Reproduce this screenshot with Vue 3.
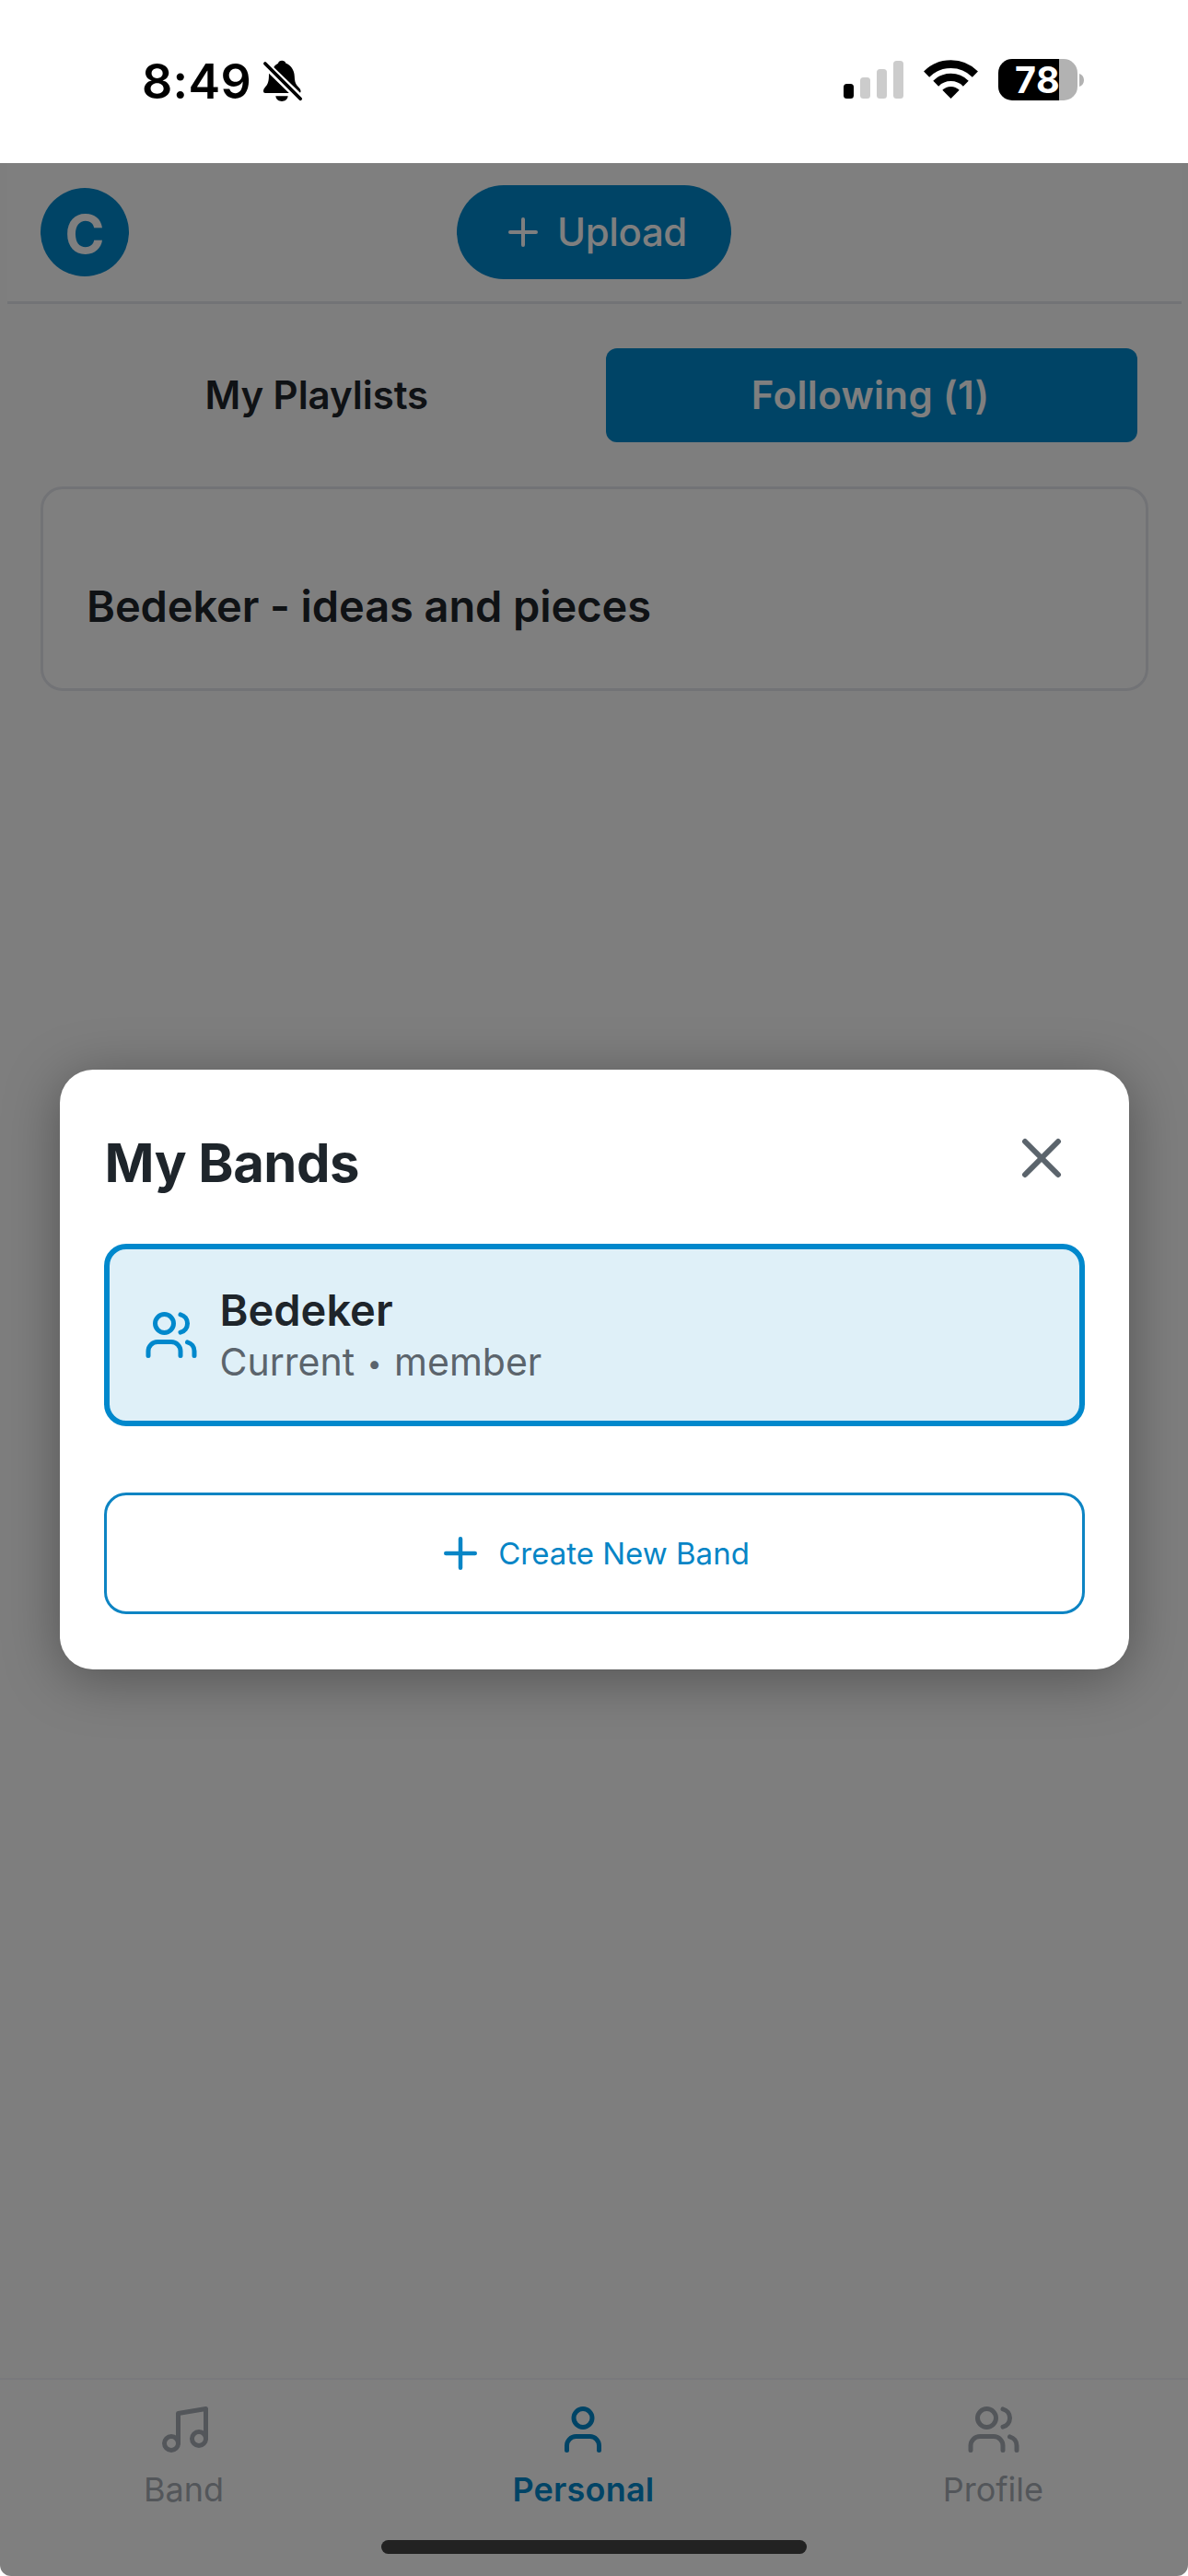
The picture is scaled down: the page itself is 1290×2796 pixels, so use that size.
<script setup>
import { ref } from 'vue'

const bars = [
  { height: 16, on: true },
  { height: 23, on: false },
  { height: 32, on: false },
  { height: 41, on: false },
]
const tabs = ['My Playlists', 'Following (1)']
const activeTab = ref(1)
const playlists = ['Bedeker - ideas and pieces']
const bands = [{ name: 'Bedeker', role: 'member' }]
const nav = [
  { label: 'Band', icon: 'music' },
  { label: 'Personal', icon: 'user' },
  { label: 'Profile', icon: 'users' },
]
const activeNav = ref('Personal')
</script>

<template>
  <div class="screen">
    <div class="status">
      <span class="time">8:49</span>
      <svg class="bell" viewBox="9 9 44 48" fill="#000">
        <path d="M21.3 18C22.8 15.4 24.6 14.6 26 13.8C26.6 9.8 33.6 9.8 34.2 13.6C40 16 43.5 21 43.8 28C44 34 45 36.200 48 39.500C50.600 42.200 51.300 43.800 50 45.800Z" />
        <path d="M16 24.800L37.800 46H12C9.500 46 9.500 42.600 11.300 40.500C15.200 36 16 34 16 24.800Z" />
        <path d="M23.300 49.200h13.400c-.9 7.600-12.500 7.600-13.400 0z" />
        <path d="M11.900 14L50.200 52.200" fill="none" stroke="#000" stroke-width="3.700" stroke-linecap="round" />
      </svg>
      <div class="indicators">
        <div class="signal">
          <i v-for="(b, i) in bars" :key="i" :class="{ on: b.on }" :style="{ height: b.height + 'px' }"></i>
        </div>
        <svg class="wifi" viewBox="0 0 59 43" fill="none" stroke="#000">
          <path d="M3.100 15.600A37.300 37.300 0 0 1 55.900 15.600" stroke-width="8.600" />
          <path d="M13.200 25.700A23.100 23.100 0 0 1 45.800 25.700" stroke-width="8.300" />
          <path d="M29.500 42L20.300 32.800A13 13 0 0 1 38.700 32.800Z" fill="#000" stroke="none" />
        </svg>
        <div class="battery">
          <div class="cell"><span>78</span></div>
          <svg class="nub" viewBox="0 0 5 14" fill="#b2b2b2"><path d="M0 0C3 .8 5 3.500 5 7S3 13.200 0 14Z" /></svg>
        </div>
      </div>
    </div>

    <div class="app">
      <header class="topbar">
        <div class="avatar">C</div>
        <button class="upload">
          <svg class="ic48" viewBox="0 0 24 24"><path d="M5 12h14M12 5v14" /></svg>
          <span>Upload</span>
        </button>
      </header>

      <main class="content">
        <div class="tabs">
          <button
            v-for="(t, i) in tabs"
            :key="t"
            class="tab"
            :class="{ active: i === activeTab }"
            @click="activeTab = i"
          >{{ t }}</button>
        </div>
        <div v-for="p in playlists" :key="p" class="card">{{ p }}</div>
      </main>

      <nav class="nav">
        <div v-for="n in nav" :key="n.label" class="item" :class="{ active: n.label === activeNav }">
          <svg class="ic60" viewBox="0 0 24 24">
            <template v-if="n.icon === 'music'">
              <path d="M9 18V5l12-2v13" />
              <circle cx="6" cy="18" r="3" />
              <circle cx="18" cy="16" r="3" />
            </template>
            <template v-else-if="n.icon === 'user'">
              <path d="M19 21v-2a4 4 0 0 0-4-4H9a4 4 0 0 0-4 4v2" />
              <circle cx="12" cy="7" r="4" />
            </template>
            <template v-else>
              <path d="M16 21v-2a4 4 0 0 0-4-4H6a4 4 0 0 0-4 4v2" />
              <circle cx="9" cy="7" r="4" />
              <path d="M22 21v-2a4 4 0 0 0-3-3.870M16 3.130a4 4 0 0 1 0 7.750" />
            </template>
          </svg>
          <span>{{ n.label }}</span>
        </div>
      </nav>

      <div class="overlay">
        <section class="modal">
          <div class="modal-head">
            <h2>My Bands</h2>
            <svg class="close" viewBox="0 0 24 24"><path d="M18 6L6 18M6 6l12 12" /></svg>
          </div>
          <div v-for="b in bands" :key="b.name" class="band">
            <svg class="ic60" viewBox="0 0 24 24">
              <path d="M16 21v-2a4 4 0 0 0-4-4H6a4 4 0 0 0-4 4v2" />
              <circle cx="9" cy="7" r="4" />
              <path d="M22 21v-2a4 4 0 0 0-3-3.870M16 3.130a4 4 0 0 1 0 7.750" />
            </svg>
            <div>
              <div class="name">{{ b.name }}</div>
              <div class="role">Current<span class="dot">•</span>{{ b.role }}</div>
            </div>
          </div>
          <button class="create">
            <svg class="ic54" viewBox="0 0 24 24"><path d="M5 12h14M12 5v14" /></svg>
            <span>Create New Band</span>
          </button>
        </section>
      </div>

      <div class="home"></div>
    </div>
  </div>
</template>

<style>
body {
  margin: 0;
  background: #fff;
}
</style>

<style scoped>
.screen {
  width: 1290px;
  height: 2796px;
  display: flex;
  flex-direction: column;
  background: #fff;
  font-family: Inter, "Liberation Sans", sans-serif;
  color: #1e252b;
  overflow: hidden;
}
.screen *,
.screen {
  box-sizing: border-box;
}
button {
  border: 0;
  padding: 0;
  font-family: inherit;
}
svg {
  display: block;
  flex: none;
}

.status {
  height: 177px;
  flex: none;
  display: flex;
  align-items: center;
  padding: 0 113px 1px 154px;
  color: #000;
}
.time {
  font-size: 52px;
  font-weight: 600;
  letter-spacing: 0.3px;
  width: 131px;
}
.bell {
  width: 44px;
  height: 48px;
}
.indicators {
  margin-left: auto;
  display: flex;
  align-items: center;
  gap: 22px;
  padding-bottom: 3px;
}
.signal {
  display: flex;
  align-items: flex-end;
  gap: 7px;
  height: 41px;
}
.signal i {
  width: 11px;
  border-radius: 3.5px;
  background: #ccc;
}
.signal i.on {
  background: #000;
}
.wifi {
  width: 59px;
  height: 43px;
}
.battery {
  display: flex;
  align-items: center;
  gap: 2.5px;
}
.cell {
  width: 85.500px;
  height: 45px;
  border-radius: 15px;
  display: flex;
  align-items: center;
  justify-content: center;
  background: linear-gradient(90deg, #000 66px, #b2b2b2 66px);
  color: #fff;
  font-size: 39.500px;
  font-weight: 700;
  letter-spacing: 0.8px;
  line-height: 45px;
  padding-top: 1px;
}
.nub {
  width: 5px;
  height: 14px;
}

.app {
  position: relative;
  flex: 1;
  display: flex;
  flex-direction: column;
  background: #fcfcfc;
  border-radius: 0 0 12px 12px;
  overflow: hidden;
}
.topbar {
  height: 153px;
  flex: none;
  margin: 0 7px 0 8px;
  padding: 0 37px 0 36px;
  display: grid;
  grid-template-columns: 1fr auto 1fr;
  align-items: center;
  background: #fff;
  border-bottom: 3px solid #e4e6ec;
}
.avatar {
  width: 96px;
  height: 96px;
  border-radius: 50%;
  background: #08c;
  color: #fff;
  display: flex;
  align-items: center;
  justify-content: center;
  font-size: 58px;
  font-weight: 700;
  line-height: 96px;
  padding-top: 4px;
}
.upload {
  width: 298px;
  height: 102px;
  border-radius: 51px;
  background: #08c;
  color: #fff;
  display: flex;
  align-items: center;
  justify-content: center;
  gap: 13px;
  font-size: 42px;
  font-weight: 450;
  letter-spacing: -0.4px;
}
.upload span {
  margin-top: -2px;
}
.ic48,
.ic54,
.ic60,
.close {
  fill: none;
  stroke: currentColor;
  stroke-width: 2;
  stroke-linecap: round;
  stroke-linejoin: round;
}
.ic48 {
  width: 48px;
  height: 48px;
}
.ic54 {
  width: 54px;
  height: 54px;
}
.ic60 {
  width: 60px;
  height: 60px;
}

.content {
  flex: 1;
  padding: 48px 43px 0 44px;
}
.tabs {
  display: flex;
  gap: 24px;
  padding: 0 12px;
  margin-bottom: 48px;
}
.tab {
  flex: 1;
  height: 102px;
  border-radius: 12px;
  background: transparent;
  color: #1e252b;
  font-size: 42px;
  font-weight: 600;
  letter-spacing: -0.05px;
  padding: 0 2px 2px 0;
}
.tab.active {
  background: #08c;
  color: #fff;
  letter-spacing: 0.35px;
}
.card {
  height: 222px;
  border: 3px solid #e4e6ec;
  border-radius: 24px;
  background: #fff;
  padding: 99px 48px 0 47px;
  font-size: 47px;
  font-weight: 600;
  letter-spacing: -0.1px;
  line-height: 56px;
}

.nav {
  height: 215px;
  flex: none;
  display: flex;
  justify-content: space-between;
  padding: 24px 157px 0 156px;
  border-top: 2px solid #f3f3f9;
  background: #fff;
}
.item {
  display: flex;
  flex-direction: column;
  align-items: center;
  gap: 13px;
  color: #a6adb5;
  font-size: 36px;
  line-height: 44px;
}
.item:not(.active) .ic60 {
  margin: 0 -2px 0 0;
}
.item.active {
  color: #08c;
  font-weight: 600;
  letter-spacing: 0.2px;
}

.overlay {
  position: absolute;
  inset: 0;
  display: flex;
  align-items: center;
  justify-content: center;
  background: rgba(0, 0, 0, 0.5);
}
.modal {
  width: 1161px;
  height: 651px;
  padding: 0 48px;
  border-radius: 36px;
  background: #fff;
  box-shadow: 0 9px 60px rgba(0, 0, 0, 0.34);
}
.modal-head {
  height: 189px;
  display: flex;
  align-items: flex-start;
  justify-content: space-between;
}
h2 {
  margin: 65px 0 0 1px;
  font-size: 58px;
  font-weight: 700;
  letter-spacing: -0.5px;
  line-height: 72px;
}
.close {
  width: 72px;
  height: 72px;
  margin: 60px 11px 0 0;
  color: #5b646c;
}
.band {
  height: 198px;
  border: 6px solid #08c;
  border-radius: 24px;
  background: #dff0f8;
  display: flex;
  align-items: center;
  gap: 23px;
  padding: 0 37px;
}
.band .ic60 {
  color: #08c;
}
.name {
  font-size: 47px;
  font-weight: 600;
  line-height: 58px;
}
.role {
  font-size: 41px;
  line-height: 54px;
  color: #5b646c;
  white-space: nowrap;
}
.dot {
  display: inline-block;
  width: 43px;
  text-align: center;
  font-size: 28px;
  line-height: 40px;
  vertical-align: 3px;
}
.create {
  width: 100%;
  height: 132px;
  margin-top: 72px;
  border: 3px solid #0d84c3;
  border-radius: 24px;
  background: #fff;
  color: #0685c6;
  display: flex;
  align-items: center;
  justify-content: center;
  gap: 14px;
  font-size: 33px;
  font-weight: 400;
  padding-right: 3px;
}

.home {
  position: absolute;
  left: 414px;
  bottom: 24px;
  width: 462px;
  height: 15px;
  border-radius: 7.500px;
  background: #222;
}
</style>
